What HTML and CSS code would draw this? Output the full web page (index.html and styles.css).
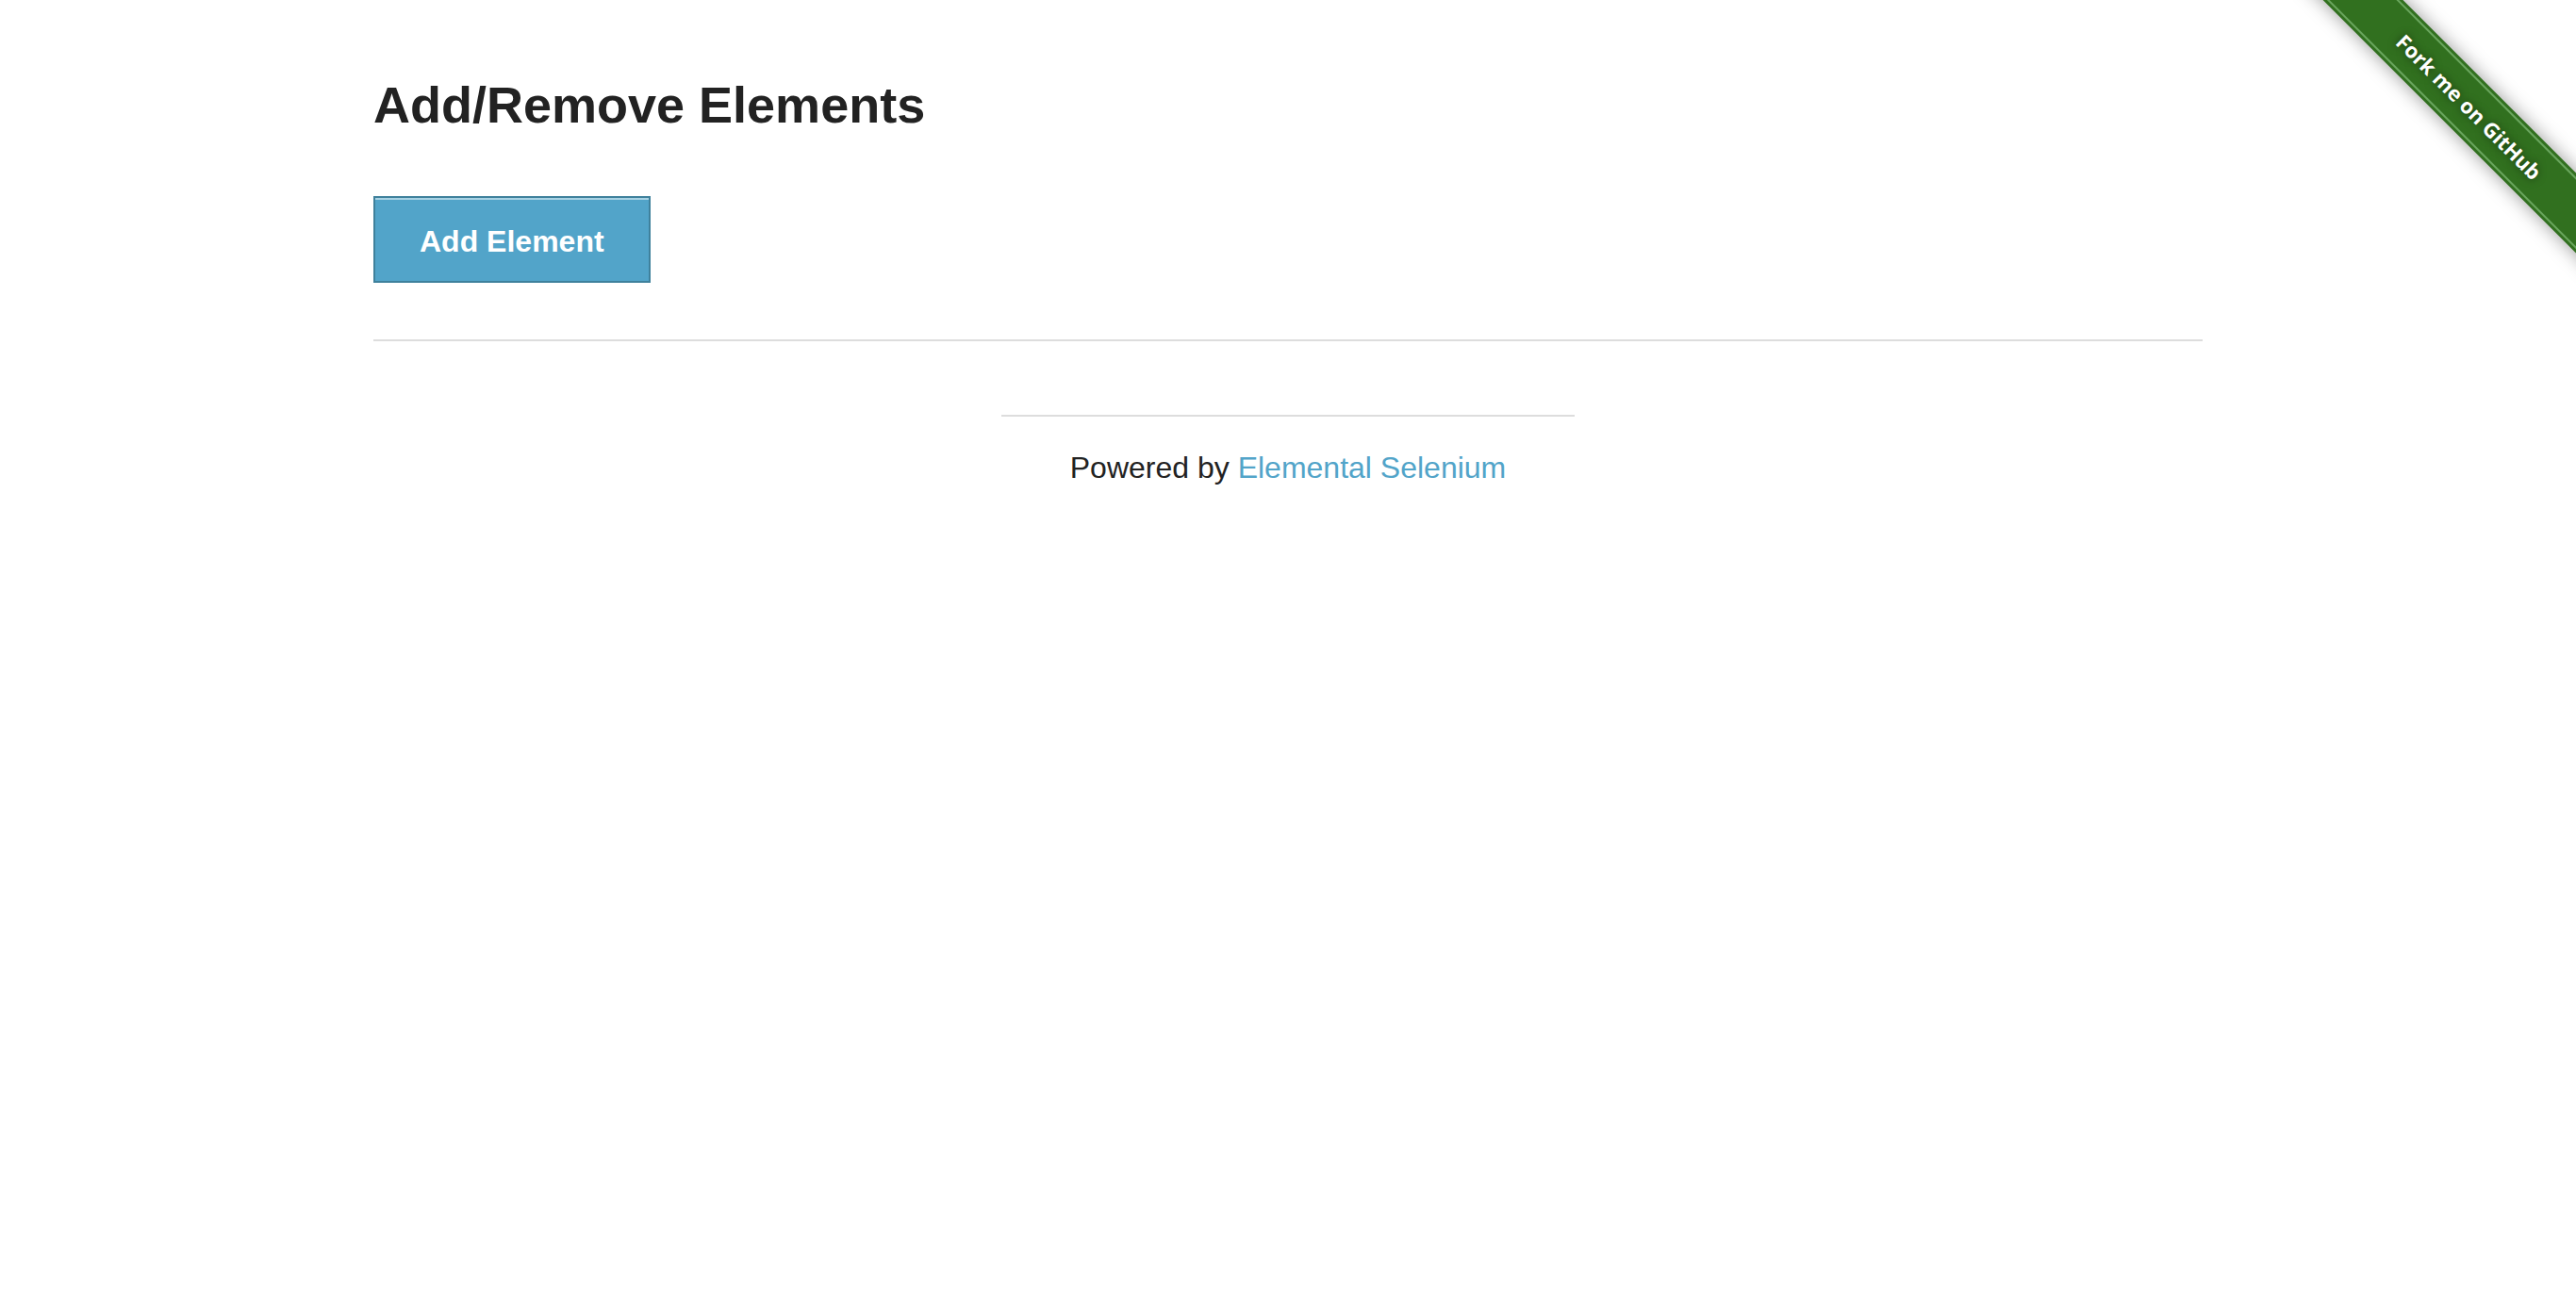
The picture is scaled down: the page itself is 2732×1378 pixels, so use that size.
FILE: index.html
```html
<!DOCTYPE html>
<html lang="en">
<head>
  <meta charset="utf-8">
  <meta name="viewport" content="width=device-width, initial-scale=1">
  <title>The Internet</title>
  <link rel="stylesheet" href="styles.css">
</head>
<body>
  <div class="ribbon">
    <a class="ribbon-link" href="#github">Fork me on GitHub</a>
  </div>
  <main class="row content">
    <h3 class="title">Add/Remove Elements</h3>
    <button class="button" type="button">Add Element</button>
  </main>
  <footer class="row footer">
    <hr class="rule">
    <div class="credit">
      <hr class="rule">
      <p class="credit-text">Powered by <a class="link" href="#elemental-selenium">Elemental Selenium</a></p>
    </div>
  </footer>
</body>
</html>
```

FILE: styles.css
```css
* {
  box-sizing: border-box;
}

body {
  margin: 0;
  background: #fff;
  color: #222;
  font-family: "Liberation Sans", Arial, sans-serif;
  font-size: 32px;
  line-height: 48px;
}

.row {
  max-width: 2000px;
  margin: 0 auto;
  padding: 0 30px;
}

.content {
  padding-top: 72px;
}

.title {
  margin: 0 0 58px;
  font-size: 54px;
  font-weight: bold;
  line-height: 78px;
}

.button {
  display: block;
  padding: 22px 47px 18px;
  border: 2px solid #3f819c;
  border-radius: 0;
  background: #52a4c9;
  box-shadow: inset 0 2px 0 #a8d2e4;
  color: #fff;
  font-family: inherit;
  font-size: 32px;
  font-weight: bold;
  line-height: 48px;
  cursor: pointer;
}

.footer {
  padding-top: 60px;
}

.rule {
  height: 2px;
  margin: 0;
  border: 0;
  background: #ddd;
}

.credit {
  width: 608px;
  max-width: 100%;
  margin: 78px auto 0;
  text-align: center;
}

.credit-text {
  margin: 30px 0 0;
}

.link {
  color: #52a4c9;
  text-decoration: none;
}

/* Corner ribbon laid over the page */
.ribbon {
  position: absolute;
  top: 0;
  right: 0;
  width: 300px;
  height: 300px;
  overflow: hidden;
}

.ribbon-link {
  position: absolute;
  top: 83px;
  left: -43px;
  width: 460px;
  height: 60px;
  outline: 2px solid #69a55d;
  outline-offset: -5px;
  background: #31701f;
  box-shadow: 0 0 20px rgba(0, 0, 0, 0.4);
  color: #fff;
  font-family: "Open Sans", "Noto Sans", sans-serif;
  font-size: 22px;
  font-weight: 700;
  line-height: 60px;
  text-align: center;
  text-decoration: none;
  text-shadow: 0 0 8px rgba(0, 0, 0, 0.5);
  transform: rotate(45deg);
}
```
